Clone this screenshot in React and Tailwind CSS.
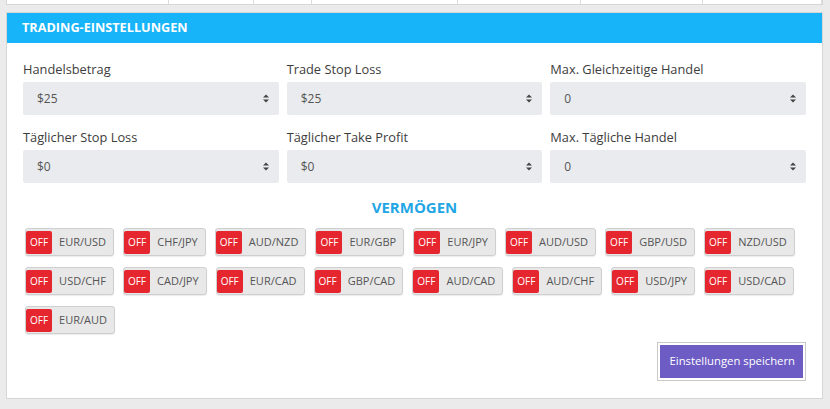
import React from 'react';

const FIELDS = [
  { label: 'Handelsbetrag', value: '$25' },
  { label: 'Trade Stop Loss', value: '$25' },
  { label: 'Max. Gleichzeitige Handel', value: '0' },
  { label: 'Täglicher Stop Loss', value: '$0' },
  { label: 'Täglicher Take Profit', value: '$0' },
  { label: 'Max. Tägliche Handel', value: '0' },
];

const PAIRS = [
  ['EUR/USD', 'CHF/JPY', 'AUD/NZD', 'EUR/GBP', 'EUR/JPY', 'AUD/USD', 'GBP/USD', 'NZD/USD'],
  ['USD/CHF', 'CAD/JPY', 'EUR/CAD', 'GBP/CAD', 'AUD/CAD', 'AUD/CHF', 'USD/JPY', 'USD/CAD'],
  ['EUR/AUD'],
];

// widths of the table cells peeking in at the top
const TOP_CELLS = [161, 86, 58, 146, 123, 123, 119];

function Arrows() {
  return (
    <svg width="6" height="9" viewBox="0 0 6 9" className="shrink-0">
      <polygon points="0,3.6 3,0.4 6,3.6" fill="#444" />
      <polygon points="0,5.4 3,8.6 6,5.4" fill="#444" />
    </svg>
  );
}

function SelectField({ label, value }) {
  return (
    <div>
      <div className="text-[12.8px] leading-[18px] text-[#3d3d3d] mb-[4px]">{label}</div>
      <div className="h-[33px] bg-[#e9ebee] rounded-[2px] flex items-center justify-between pl-[14px] pr-[10px]">
        <span className="text-[12px] text-[#555]">{value}</span>
        <Arrows />
      </div>
    </div>
  );
}

function Chip({ name }) {
  return (
    <div className="flex h-[28px] border border-[#cfcfcf] rounded-[3px] bg-[#e8e8e8] pt-[2px] pb-[1px] shadow-[0_1px_1px_rgba(0,0,0,0.08)]">
      <div className="bg-[#e6262e] flex items-center px-[4px] text-[10px] text-white rounded-[2px]">OFF</div>
      <div className="flex items-center px-[7px] text-[11px] text-[#555]">{name}</div>
    </div>
  );
}

export default function App() {
  return (
    <div className="min-h-screen w-full bg-[#ebebeb] pl-[6px] pr-[7px] font-['Open_Sans',sans-serif]">
      <div className="flex h-[5px] bg-white border-b border-x border-[#d6d6d6]">
        {TOP_CELLS.map((w, i) => (
          <div key={i} style={{ width: w }} className={i ? 'border-l border-[#dcdcdc]' : ''} />
        ))}
        <div className="flex-1 border-l border-[#dcdcdc]" />
      </div>

      <div className="mt-[7px] bg-white border border-[#d6d6d6]">
        <div className="h-[30px] bg-[#17b4f9] flex items-center pl-[15px] text-white text-[12.7px] font-bold">
          TRADING-EINSTELLUNGEN
        </div>

        <div className="pl-[16px] pr-[16px] pt-[17px] pb-[17px]">
          <div className="grid grid-cols-3 gap-x-[8px] gap-y-[13px]">
            {FIELDS.map((f) => (
              <SelectField key={f.label} label={f.label} value={f.value} />
            ))}
          </div>

          <div className="mt-[14px] mb-[11px] text-center text-[15px] leading-[20px] font-bold text-[#22a6e6]">
            VERMÖGEN
          </div>

          <div className="flex flex-col gap-y-[11px] pl-[2px]">
            {PAIRS.map((row, i) => (
              <div key={i} className="flex gap-x-[9px]">
                {row.map((p) => (
                  <Chip key={p} name={p} />
                ))}
              </div>
            ))}
          </div>

          <div className="flex justify-end mt-[8px]">
            <div className="border border-[#c9c9c9] p-[2px] bg-white">
              <button
                type="button"
                className="h-[33px] pl-[10px] pr-[8px] bg-[#6d5cc4] text-white text-[11.3px]"
              >
                Einstellungen speichern
              </button>
            </div>
          </div>
        </div>
      </div>
    </div>
  );
}
